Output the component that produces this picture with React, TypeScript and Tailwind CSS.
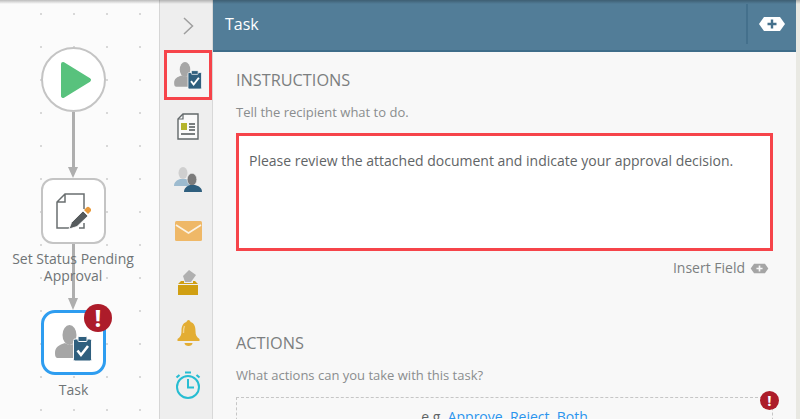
const dots: number[][] = [];
for (const y of [14, 47, 80, 113, 146, 179, 212, 245, 278, 311, 344, 377, 410]) {
  for (const x of [41, 74, 107, 140]) dots.push([x, y]);
}

function TaskIcon({ className }: { className: string }) {
  return (
    <svg viewBox="0 0 37 36" className={className}>
      <ellipse cx="14.5" cy="10" rx="7" ry="10" fill="#a6a6a6" />
      <path d="M0 28c0-6 4-8 10-10 3 2 7 2 10 0l3 1v14H3c-2 0-3-1-3-5z" fill="#a6a6a6" />
      <rect x="18.5" y="14" width="18" height="22" rx="1.5" fill="#2f5f7e" stroke="#fafafa" strokeWidth="1" />
      <rect x="23" y="11.5" width="9" height="5" rx="1" fill="#2f5f7e" stroke="#fafafa" strokeWidth="1" />
      <path d="M22.5 25.5l3.5 4.5 7-9" fill="none" stroke="#fff" strokeWidth="2.6" />
    </svg>
  );
}

function Alert({ className, fontClass }: { className: string; fontClass: string }) {
  return (
    <div className={`absolute flex items-center justify-center rounded-full bg-[#ad1c2a] text-white font-bold ${className} ${fontClass}`}>
      !
    </div>
  );
}

function PlusHex({ fill, plus, className }: { fill: string; plus: string; className: string }) {
  return (
    <svg viewBox="0 0 28 16" className={className}>
      <path d="M6 1h16l5 7-5 7H6L1 8z" fill={fill} />
      <path d="M14 3.5v9M9.5 8h9" stroke={plus} strokeWidth="2.4" fill="none" />
    </svg>
  );
}

export default function App() {
  return (
    <div className="relative flex h-[419px] w-[800px] overflow-hidden bg-[#e9e9e3] font-['Open_Sans',sans-serif]">
      {/* Canvas */}
      <div className="relative h-full w-[160px] shrink-0 border-r border-[#d6d6d6] bg-[#fbfbfb]">
        {dots.map(([x, y]) => (
          <div key={`${x}-${y}`} className="absolute h-[1.5px] w-[1.5px] bg-[#d8d8d8]" style={{ left: x - 1, top: y - 1 }} />
        ))}
        <div className="absolute left-[72px] top-[112px] h-[58px] w-[2.5px] bg-[#aeaeae]" />
        <div className="absolute left-[68px] top-[167px] h-0 w-0 border-x-[5.5px] border-t-[11px] border-x-transparent border-t-[#aeaeae]" />
        <div className="absolute left-[72px] top-[244px] h-[56px] w-[2.5px] bg-[#aeaeae]" />
        <div className="absolute left-[68px] top-[298px] h-0 w-0 border-x-[5.5px] border-t-[12px] border-x-transparent border-t-[#aeaeae]" />

        <div className="absolute left-[41px] top-[47px] flex h-[65px] w-[65px] items-center justify-center rounded-full border-2 border-[#c4c4c4] bg-white">
          <svg viewBox="0 0 32 38" className="ml-[4px] h-[38px] w-[32px]">
            <path d="M3 3l26 16L3 35z" fill="#58c27d" stroke="#58c27d" strokeWidth="4" strokeLinejoin="round" />
          </svg>
        </div>

        <div className="absolute left-[41px] top-[178px] flex h-[66px] w-[65px] items-center justify-center rounded-[12px] border-2 border-[#c4c4c4] bg-white">
          <svg viewBox="0 0 35 37" className="h-[37px] w-[35px]">
            <path d="M28 16V1H9L1 9v26h12M9 1v8H1M23 35h5v-5" fill="none" stroke="#6a6f70" strokeWidth="1.5" />
            <path d="M13 36l2.5-6.5L27 18l5 5-11 10.5z" fill="#565b5d" stroke="#fff" strokeWidth=".8" />
            <path d="M28 17l2.5-2.5a2 2 0 0 1 3 0l1 1a2 2 0 0 1 0 3L32 21z" fill="#e89a3c" />
          </svg>
        </div>

        <div className="absolute left-[3px] top-[250px] w-[140px] text-center text-[14px] leading-[17px] text-[#6f7476]">
          Set Status Pending
          <br />
          Approval
        </div>

        <div className="absolute left-[41px] top-[310px] flex h-[65px] w-[65px] items-center justify-center rounded-[14px] border-[3px] border-[#2e9df0] bg-white">
          <TaskIcon className="mr-[1px] h-[36px] w-[37px]" />
        </div>
        <Alert className="left-[84px] top-[304px] h-[28px] w-[28px]" fontClass="text-[24px] leading-none" />
        <div className="absolute left-[41px] top-[381px] w-[65px] text-center text-[14px] leading-[18px] text-[#6f7476]">Task</div>
      </div>

      {/* Icon rail */}
      <div className="flex h-full w-[53px] shrink-0 flex-col items-center border-r border-[#d8d8d8] bg-[#eeeeee] pl-[4px]">
        <svg viewBox="0 0 11 18" className="mt-[17px] h-[18px] w-[11px]">
          <path d="M1 1l8.5 8L1 17" fill="none" stroke="#9e9e9e" strokeWidth="1.5" />
        </svg>
        <div className="mt-[15px] flex h-[50px] w-[48px] items-center justify-center border-[3px] border-[#f6444a] bg-[#f6f6f6]">
          <TaskIcon className="mr-[1px] h-[27px] w-[28px]" />
        </div>
        <svg viewBox="0 0 22 27" className="mt-[13px] h-[27px] w-[22px]">
          <path d="M6 1h15v25H1V6z" fill="#fafafa" stroke="#62686a" strokeWidth="1.4" />
          <path d="M6 1v5H1" fill="none" stroke="#62686a" strokeWidth="1.2" />
          <rect x="4" y="10" width="6" height="7" fill="#b5b42c" />
          <path d="M12 11h6M12 14h6M12 17h6M4 21h14" stroke="#4f5557" strokeWidth="1.5" />
        </svg>
        <svg viewBox="0 0 29 28" className="mt-[25px] h-[28px] w-[29px]">
          <ellipse cx="9" cy="8" rx="4.5" ry="6" fill="#cfcfcf" />
          <path d="M0 21c0-4 3-6 6-7h6c3 1 5 3 5 7z" fill="#9dbbcf" />
          <ellipse cx="18" cy="14.5" rx="4.8" ry="6.2" fill="#7b7b7b" stroke="#eee" strokeWidth=".6" />
          <path d="M10 27c0-4 3-6 6-7h5c4 1 7 3 7 7z" fill="#2f5f7e" />
        </svg>
        <svg viewBox="0 0 27 20" className="mt-[28px] h-[20px] w-[27px]">
          <rect width="27" height="20" rx="1.5" fill="#efb867" />
          <path d="M1 4l12.5 8L26 4" fill="none" stroke="#fbf3e4" strokeWidth="1.6" />
        </svg>
        <svg viewBox="0 0 20 26" className="mt-[28px] h-[26px] w-[20px]">
          <path d="M5 7l6-6 7 5-5 7H7z" fill="#b0b0b0" />
          <path d="M0 26V15l3-3h3v2h9v-2h2l3 3v11z" fill="#d09f12" />
          <path d="M0 15.5h20" stroke="#eee" strokeWidth="1" />
        </svg>
        <svg viewBox="0 0 23 28" className="mt-[24px] h-[28px] w-[23px]">
          <path d="M11.5 1c1 0 2 1 2 2 4 1 5 5 5 9 0 4 1 6 4 8v2H.5v-2c3-2 4-4 4-8 0-4 1-8 5-9 0-1 1-2 2-2z" fill="#e3ad33" />
          <path d="M7.5 24h8c0 2-2 3-4 3s-4-1-4-3z" fill="#e3ad33" />
          <path d="M7.5 7c-1 2-1 5-1 7" stroke="#f3d48c" strokeWidth="1.4" fill="none" />
        </svg>
        <svg viewBox="0 0 26 28" className="mt-[24px] h-[28px] w-[26px]">
          <circle cx="13" cy="16" r="11" fill="none" stroke="#27bdd2" strokeWidth="2" />
          <path d="M13 8v8.5h6" fill="none" stroke="#27bdd2" strokeWidth="2" />
          <path d="M10 1.5h6M1.5 6.5l3-2.5M24.5 6.5l-3-2.5" stroke="#27bdd2" strokeWidth="2.2" />
        </svg>
      </div>

      {/* Panel */}
      <div className="flex h-full w-[583px] shrink-0 flex-col bg-[#f8f8f8]">
        <div className="flex h-[52px] shrink-0 items-center border-b-2 border-[#3f6d8a] bg-[#527d98] pb-[2px] pl-[12px] text-[16px] text-white">
          <span className="flex-1">Task</span>
          <div className="flex h-[40px] w-[50px] items-center justify-center border-l-2 border-[#44708c]">
            <PlusHex fill="#ffffff" plus="#44708c" className="h-[16px] w-[28px]" />
          </div>
        </div>
        <div className="flex flex-col px-[23px]">
          <h2 className="mt-[17px] text-[16.3px] leading-[22px] text-[#7c7f80]">INSTRUCTIONS</h2>
          <p className="mt-[12px] text-[13px] leading-[18px] text-[#8a8d8e]">Tell the recipient what to do.</p>
          <div className="mt-[12px] h-[118px] w-[537px] border-[3px] border-[#f6444a] bg-white pl-[10px] pt-[16px] text-[14px] leading-[18px] text-[#5f6466]">
            Please review the attached document and indicate your approval decision.
          </div>
          <div className="mt-[8px] flex w-[537px] items-center justify-end gap-[5px] pr-[4px] text-[14px] leading-[18px] text-[#7c7f80]">
            <span>Insert Field</span>
            <PlusHex fill="#a5a5a5" plus="#f6f6f6" className="h-[11px] w-[19px]" />
          </div>
          <h2 className="mt-[55px] text-[16.3px] leading-[22px] text-[#7c7f80]">ACTIONS</h2>
          <p className="mt-[12px] text-[13px] leading-[18px] text-[#8a8d8e]">What actions can you take with this task?</p>
          <div className="relative mt-[13px] h-[60px] w-[537px] border border-dashed border-[#c6c6c6] pt-[10px] text-center text-[14px] leading-[18px] text-[#5f6466]">
            e.g. <span className="text-[#2b95ee]">Approve, Reject, Both</span>
            <Alert className="right-[-7px] top-[-7px] h-[19px] w-[19px]" fontClass="text-[15px] leading-none" />
          </div>
        </div>
      </div>

      {/* Soft shadow along the top edge of the window */}
      <div className="absolute inset-x-0 top-0 h-[4px] bg-gradient-to-b from-black/25 to-transparent" />
    </div>
  );
}
